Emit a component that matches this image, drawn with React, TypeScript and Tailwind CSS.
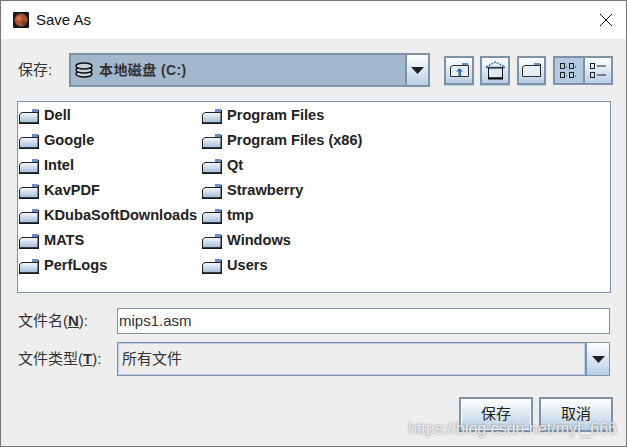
import React from 'react';

const FONT = "font-['Liberation_Sans','Noto_Sans_CJK_SC',sans-serif]";

const leftFolders = ['Dell', 'Google', 'Intel', 'KavPDF', 'KDubaSoftDownloads', 'MATS', 'PerfLogs'];
const rightFolders = ['Program Files', 'Program Files (x86)', 'Qt', 'Strawberry', 'tmp', 'Windows', 'Users'];

const metal = 'bg-gradient-to-b from-white to-[#b8cfe5]';

function FolderIcon() {
  return (
    <svg width="20" height="16" viewBox="0 0 20 16" className="shrink-0">
      <defs>
        <linearGradient id="fold" x1="0" y1="0" x2="0" y2="1">
          <stop offset="0" stopColor="#f7f9fc" />
          <stop offset="1" stopColor="#9db9d8" />
        </linearGradient>
      </defs>
      <path d="M13 1h6v3h-6z" fill="#6a8fc8" />
      <path d="M.5 6.5 3 4.5h16v10.5H.5z" fill="url(#fold)" stroke="#222" strokeWidth="1" />
      <path d="M19.5 2v13" stroke="#222" strokeWidth="1" />
      <path d="M0 15.2h20" stroke="#111" strokeWidth="1.5" />
    </svg>
  );
}

function Arrow() {
  return (
    <svg width="13" height="7" viewBox="0 0 13 7">
      <path d="M0 0h13L6.5 7z" fill="#222" />
    </svg>
  );
}

function ToolButton({ children, active, className }: { children: React.ReactNode; active?: boolean; className?: string }) {
  return (
    <div className={`h-[29px] shrink-0 flex items-center justify-center border-2 border-[#7f93a8] ${active ? 'bg-[#b3c9e0]' : metal} ${className ?? ''}`}>
      {children}
    </div>
  );
}

function Folder({ name }: { name: string }) {
  return (
    <div className="h-[25px] flex items-center gap-[5px] whitespace-nowrap">
      <FolderIcon />
      <span className="text-[14.6px] font-bold text-[#222]">{name}</span>
    </div>
  );
}

export default function App() {
  return (
    <div className={`w-[627px] h-[447px] flex flex-col border border-[#777] bg-[#eeeeee] overflow-hidden relative ${FONT}`}>
      <div className="h-[38px] shrink-0 bg-white flex items-center pl-[12px] pr-[13px]">
        <svg width="16" height="16" viewBox="0 0 16 16" className="shrink-0">
          <rect width="16" height="16" rx="1" fill="#141a1e" />
          <circle cx="8" cy="8" r="6.5" fill="#a5502f" />
          <circle cx="6" cy="6.5" r="2.5" fill="#d0703f" />
          <circle cx="11" cy="11" r="2" fill="#6e4232" />
        </svg>
        <span className="ml-[7px] text-[15px] text-[#111]">Save As</span>
        <svg width="14" height="14" viewBox="0 0 14 14" className="ml-auto">
          <path d="M1 1l12 12M13 1L1 13" stroke="#111" strokeWidth="1" />
        </svg>
      </div>

      <div className="flex-1 flex flex-col px-[16px] min-h-0">
        <div className="h-[34px] mt-[14px] shrink-0 flex items-center">
          <span className="w-[52px] shrink-0 pl-[1px] text-[15px] text-[#333]">保存:</span>
          <div className="w-[361px] h-[34px] shrink-0 flex border-2 border-[#7f93a8] bg-[#a3b8cc]">
            <div className="flex-1 flex items-center pl-[3px] gap-[5px]">
              <svg width="20" height="16" viewBox="0 0 20 16">
                <g fill="#c9d2da" stroke="#111" strokeWidth="1.4">
                  <ellipse cx="10" cy="12" rx="8" ry="3" />
                  <ellipse cx="10" cy="8" rx="8" ry="3" />
                  <ellipse cx="10" cy="4" rx="8" ry="3" />
                </g>
              </svg>
              <span className="text-[14px] font-bold text-[#333] tracking-[0.4px]">本地磁盘 (C:)</span>
            </div>
            <div className={`w-[23px] flex items-center justify-center border-l-2 border-[#7f93a8] ${metal}`}>
              <Arrow />
            </div>
          </div>
          <div className="ml-[14px] flex items-center">
            <ToolButton className="w-[30px] shadow-[0_1px_0_#b8cfe5]">
              <svg width="19" height="16" viewBox="0 0 19 16">
                <path d="M12 1h6v3h-6z" fill="#6a8fc8" />
                <path d="M.5 5 3 3.5h15.5v11H.5z" fill="#e6edf5" stroke="#333" />
                <path d="M9.5 6 6 9.5h2.5V14h2.5V9.5H13z" fill="#2f6fb5" />
              </svg>
            </ToolButton>
            <ToolButton className="ml-[6px] w-[30px] shadow-[0_1px_0_#b8cfe5]">
              <svg width="21" height="19" viewBox="0 0 21 19">
                <path d="M1 6 10.5 1 20 6" fill="none" stroke="#3a6ea5" strokeWidth="1.3" strokeDasharray="2 1" />
                <path d="M1 6.5h19" stroke="#3a6ea5" strokeWidth="1.6" />
                <rect x="3.5" y="7" width="14" height="10" fill="#dfe8f2" stroke="#111" />
                <path d="M3 17.5h15" stroke="#000" strokeWidth="2" />
              </svg>
            </ToolButton>
            <ToolButton className="ml-[7px] w-[29px] shadow-[0_1px_0_#b8cfe5]">
              <svg width="19" height="16" viewBox="0 0 19 16">
                <path d="M12 1h6v3h-6z" fill="#6a8fc8" />
                <path d="M.5 5 3 3.5h15.5v11H.5z" fill="#e6edf5" stroke="#333" />
                <path d="M18.5 2v12.5" stroke="#222" />
              </svg>
            </ToolButton>
            <ToolButton active className="ml-[7px] w-[30px] border-r-0">
              <svg width="20" height="18" viewBox="0 0 20 18" fill="none" stroke="#222">
                <rect x="1.5" y="2.5" width="4" height="5" />
                <rect x="10.5" y="2.5" width="4" height="5" />
                <rect x="1.5" y="11.5" width="4" height="5" />
                <rect x="10.5" y="11.5" width="4" height="5" />
                <path d="M7 6h1M16 6h1M7 15h1M16 15h1" />
              </svg>
            </ToolButton>
            <ToolButton className="w-[30px]">
              <svg width="18" height="18" viewBox="0 0 18 18" fill="none" stroke="#222">
                <rect x="1.5" y="2.5" width="4" height="5" />
                <rect x="1.5" y="11.5" width="4" height="5" />
                <path d="M8 5h9M8 14h9" />
              </svg>
            </ToolButton>
          </div>
        </div>

        <div className="mt-[14px] w-[594px] h-[192px] shrink-0 bg-white border border-[#7f93a8] flex pt-[1px] pl-[1px]">
          <div className="w-[183px] flex flex-col">
            {leftFolders.map((f) => <Folder key={f} name={f} />)}
          </div>
          <div className="flex flex-col">
            {rightFolders.map((f) => <Folder key={f} name={f} />)}
          </div>
        </div>

        <div className="mt-[15px] h-[26px] shrink-0 flex items-center">
          <span className="w-[100px] shrink-0 pl-[1px] text-[15px] text-[#333]">文件名(<b className="underline">N</b>):</span>
          <div className="w-[494px] h-[26px] bg-white border border-[#7f93a8] flex items-center pl-[1px] text-[15px] text-[#333]">mips1.asm</div>
        </div>

        <div className="mt-[8px] h-[34px] shrink-0 flex items-center">
          <span className="w-[100px] shrink-0 pl-[1px] text-[15px] text-[#333]">文件类型(<b className="underline">T</b>):</span>
          <div className="w-[496px] h-[34px] flex border border-[#7f93a8]">
            <div className="flex-1 flex items-center pl-[3px] text-[15px] text-[#333] border border-[#b8cfe5]">所有文件</div>
            <div className={`w-[24px] flex items-center justify-center border-l-2 border-[#7f93a8] ${metal}`}>
              <Arrow />
            </div>
          </div>
        </div>

        <div className="mt-[21px] flex justify-end gap-[6px] w-[596px]">
          <div className={`w-[74px] h-[35px] flex items-center justify-center border-2 border-[#7f93a8] text-[15px] text-[#222] shadow-[inset_0_0_0_1px_#fff] ${metal}`}>保存</div>
          <div className={`w-[74px] h-[35px] flex items-center justify-center border-2 border-[#7f93a8] text-[15px] text-[#222] ${metal}`}>取消</div>
        </div>
      </div>

      <span className="absolute right-[9px] bottom-[8px] text-[16px] leading-[18px] text-white/85 [text-shadow:0_0_2px_#666]">https://blog.csdn.net/myf_666</span>
    </div>
  );
}
